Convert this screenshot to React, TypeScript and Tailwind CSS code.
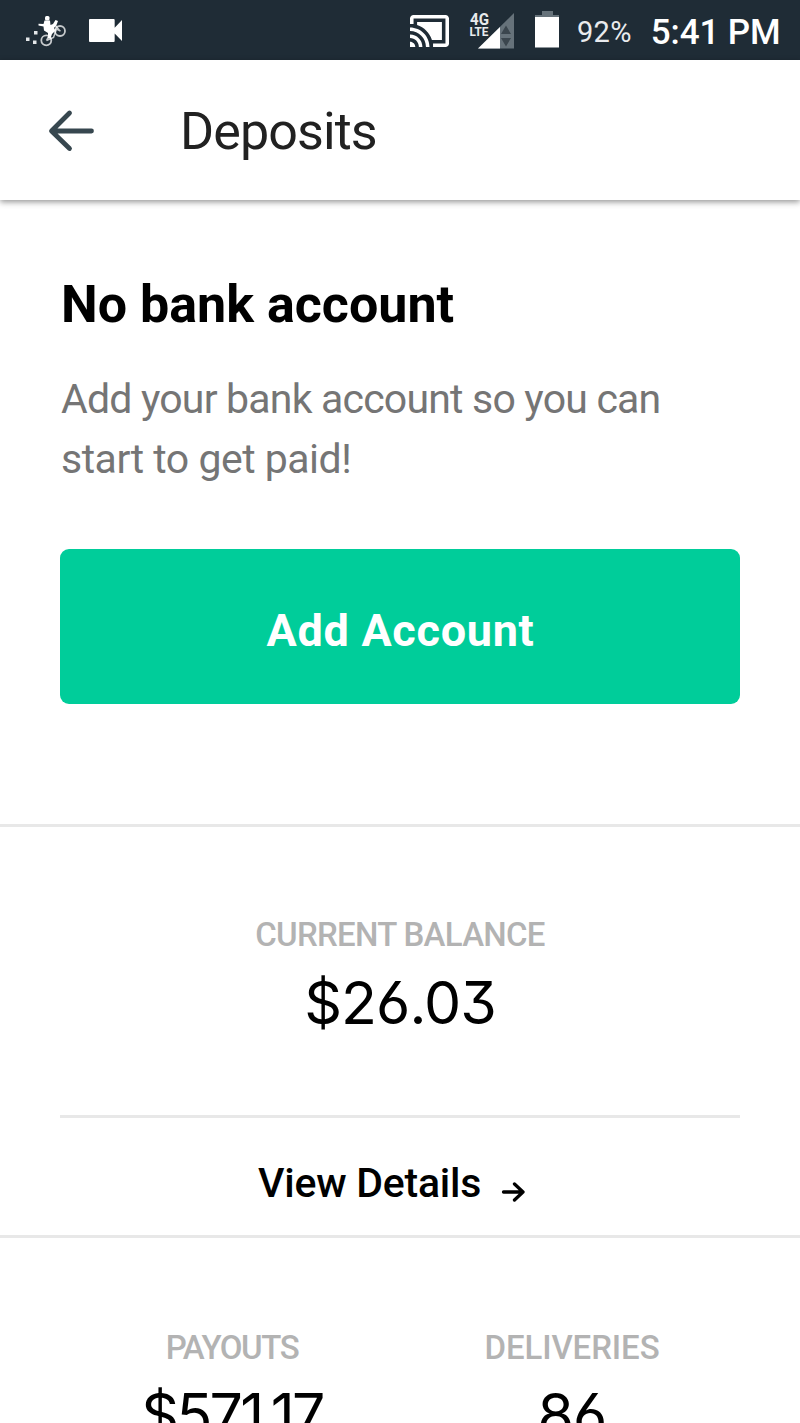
import type { ReactNode } from 'react';

function CourierIcon() {
  return (
    <svg width="42" height="32" viewBox="25 15 42 32" fill="none" stroke="#fff">
      <path d="M26 37.500h3.500v3.500h-3.500zM34 31h3.500v3.500h-3.500zM33 40.500h3.500v3.500h-3.500z" fill="#e4e7e9" stroke="none" />
      <circle cx="46.300" cy="40.300" r="5" strokeWidth="1.800" opacity=".75" />
      <circle cx="60" cy="31" r="5" strokeWidth="1.800" opacity=".75" />
      <path d="M46.500 40.500l4-8 6-3.500 4 2M46.500 40.500l7-3 3-8.500M55 25l5 6" strokeWidth="1.500" opacity=".75" />
      <rect x="45" y="16" width="4.500" height="4.500" rx="1.500" fill="#fff" stroke="none" />
      <path d="M44.500 20.500h5.500l.5 4.500 2.500-1 2.500-4 2.500 1-1.500 4-2.500 3 1 3-3 3-1.500 4.500-2.500 0 0-5.500-4-2.500-.5-4-5-1 0-1.800 5 .3z" fill="#fff" stroke="none" />
    </svg>
  );
}

function VideoIcon() {
  return (
    <svg width="33" height="23" viewBox="3 6 18 12" preserveAspectRatio="none" fill="#fff">
      <path d="M17 10.500V6.500c0-.3-.2-.5-.5-.5H3.500c-.3 0-.5.2-.5.500v11c0 .3.200.5.500.5h13c.3 0 .5-.2.500-.5v-4l4 4v-11l-4 4z" />
    </svg>
  );
}

function CastIcon() {
  return (
    <svg width="39" height="32" viewBox="1 3 22 18" preserveAspectRatio="none" fill="#fff">
      <path d="M1 18v3h3c0-1.66-1.34-3-3-3zm0-4v2c2.76 0 5 2.24 5 5h2c0-3.87-3.13-7-7-7zm18-7H5v1.63c3.96 1.28 7.09 4.41 8.37 8.37H19V7zM1 10v2c4.97 0 9 4.03 9 9h2c0-6.08-4.93-11-11-11zm20-7H3c-1.1 0-2 .9-2 2v3h2V5h18v14h-7v2h7c1.1 0 2-.9 2-2V5c0-1.1-.9-2-2-2z" />
    </svg>
  );
}

function SignalIcon() {
  return (
    <svg width="46" height="38" viewBox="469 10 46 38">
      <path d="M514 12v35.500h-36z" fill="#66727a" />
      <path d="M500 26v21.500h-22z" fill="#fff" />
      <path d="M506 24.500l5 8.500h-10zM506 45.500l5-8.500h-10z" fill="#3b464e" />
      <g fill="#e8ebed" fontFamily="Roboto, sans-serif" fontWeight="700">
        <text x="470" y="23.500" fontSize="16.500" textLength="19" lengthAdjust="spacingAndGlyphs">4G</text>
        <text x="469.500" y="35" fontSize="12.500" textLength="19" lengthAdjust="spacingAndGlyphs">LTE</text>
      </g>
    </svg>
  );
}

function BatteryIcon() {
  return (
    <svg width="24" height="37" viewBox="535 11 24 37">
      <path d="M542 11h11v4h6v3h-24v-3h7z" fill="#66727a" />
      <path d="M535 17h24v30.500h-24z" fill="#fff" />
    </svg>
  );
}

function StatusBar() {
  return (
    <div className="flex h-[60px] shrink-0 items-center bg-[#1f2c36] pl-[25px] text-white">
      <div className="pt-px"><CourierIcon /></div>
      <div className="ml-[22px] pt-px"><VideoIcon /></div>
      <div className="ml-[288px] pt-[2px]"><CastIcon /></div>
      <div className="ml-5 pb-px"><SignalIcon /></div>
      <div className="ml-5 pb-[2px]"><BatteryIcon /></div>
      <span className="ml-[18px] pt-1 text-[29px] leading-none tracking-[0.3px] text-[#e9ebed]">92%</span>
      <span className="ml-[19px] pt-1 text-[35px] leading-none font-medium tracking-[-0.1px] whitespace-nowrap">5:41 PM</span>
    </div>
  );
}

function Header() {
  return (
    <header className="flex h-[140px] shrink-0 items-center bg-white pl-[48px] shadow-[0_2px_6px_rgba(0,0,0,0.42)]">
      <button aria-label="Back" className="pt-px">
        <svg width="48" height="44" viewBox="48 109 48 44" fill="none" stroke="#37474f" strokeWidth="4.800" strokeLinecap="round" strokeLinejoin="round">
          <path d="M69.500 113L51.500 131l18 17.500M52 131h39.500" />
        </svg>
      </button>
      <h1 className="ml-[84px] pt-[3px] text-[52px] leading-[60px] tracking-[-0.9px] text-[#212121]">Deposits</h1>
    </header>
  );
}

function Label({ className, children }: { className: string; children: ReactNode }) {
  return <div className={`text-[33px] leading-[40px] font-medium text-[#b3b3b3] ${className}`}>{children}</div>;
}

function Amount({ className, children }: { className: string; children: ReactNode }) {
  return (
    <div className={`font-['Inter',sans-serif] text-[59px] leading-[72px] [font-feature-settings:'cv03','cv09'] ${className}`}>
      {children}
    </div>
  );
}

export default function App() {
  return (
    <div className="flex h-[1423px] w-[800px] flex-col overflow-hidden bg-white font-['Roboto',sans-serif] text-black">
      <StatusBar />
      <Header />

      <section className="h-[627px] shrink-0 border-b-[3px] border-[#e8e8e8] px-[60px] pt-[75px]">
        <h2 className="pl-px text-[52px] leading-[60px] font-bold">No bank account</h2>
        <p className="mt-[34px] pl-px text-[41px] leading-[60px] whitespace-nowrap text-[#757575]">
          <span className="block tracking-[-0.8px]">Add your bank account so you can</span>
          <span className="block tracking-[-0.5px]">start to get paid!</span>
        </p>
        <button className="mt-[60px] flex h-[155px] w-full items-center justify-center rounded-[9px] bg-[#00cd9a] pt-2 pl-px text-[45px] font-bold tracking-[0.7px] text-white">
          Add Account
        </button>
      </section>

      <section className="shrink-0 border-b-[3px] border-[#e8e8e8] px-[60px] text-center">
        <div className="h-[291px] border-b-[3px] border-[#e8e8e8] pt-[88px]">
          <Label className="tracking-[-0.7px]">CURRENT BALANCE</Label>
          <div className="mt-3">
            <Amount className="tracking-[-1px]">$26.03</Amount>
          </div>
        </div>
        <button className="flex h-[117px] w-full items-center pt-[14px] pl-[198px] text-[41px] font-medium">
          <span className="w-[243px] text-left tracking-[-0.25px] whitespace-nowrap">View Details</span>
          <svg className="mt-4" width="25" height="22" viewBox="501 1181 25 22" fill="none" stroke="#000" strokeWidth="3.300" strokeLinecap="round" strokeLinejoin="round">
            <path d="M503.500 1192h19.500M514.500 1184l8.500 8-8.500 8" />
          </svg>
        </button>
      </section>

      <section className="grid shrink-0 grid-cols-2 pt-[90px] pr-[58px] pl-[62px] text-center">
        <div>
          <Label className="tracking-[-1.4px]">PAYOUTS</Label>
          <div className="mt-[11px]">
            <Amount className="tracking-[-2.7px]">$571.17</Amount>
          </div>
        </div>
        <div>
          <Label className="tracking-[-0.1px]">DELIVERIES</Label>
          <div className="mt-[11px]">
            <Amount className="tracking-[-1px]">86</Amount>
          </div>
        </div>
      </section>
    </div>
  );
}
